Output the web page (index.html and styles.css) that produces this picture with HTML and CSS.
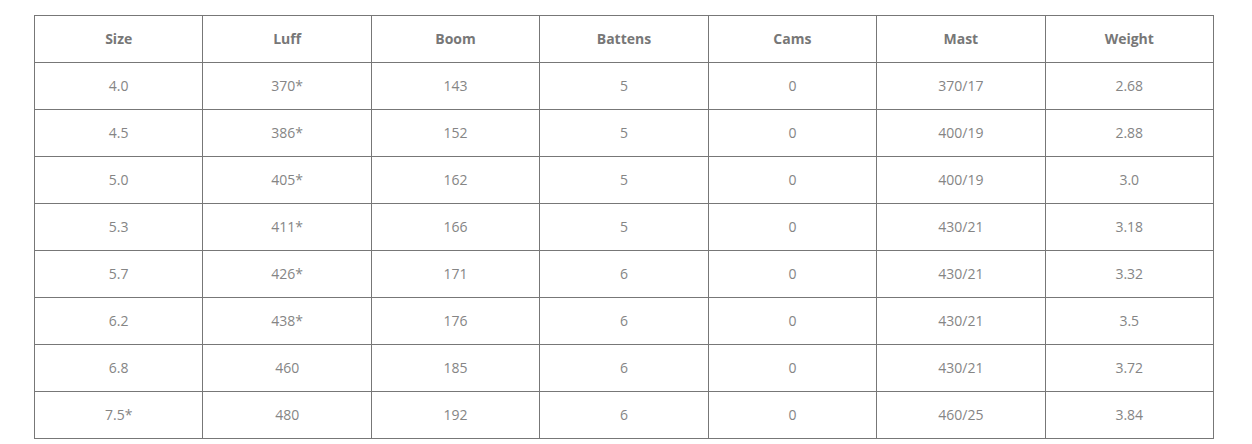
FILE: index.html
```html
<!DOCTYPE html>
<html>
<head>
<meta charset="utf-8">
<link rel="stylesheet" href="styles.css">
</head>
<body>
<div class="wrap">
<table class="specs">
<thead>
<tr><th>Size</th><th>Luff</th><th>Boom</th><th>Battens</th><th>Cams</th><th>Mast</th><th>Weight</th></tr>
</thead>
<tbody>
<tr><td>4.0</td><td>370*</td><td>143</td><td>5</td><td>0</td><td>370/17</td><td>2.68</td></tr>
<tr><td>4.5</td><td>386*</td><td>152</td><td>5</td><td>0</td><td>400/19</td><td>2.88</td></tr>
<tr><td>5.0</td><td>405*</td><td>162</td><td>5</td><td>0</td><td>400/19</td><td>3.0</td></tr>
<tr><td>5.3</td><td>411*</td><td>166</td><td>5</td><td>0</td><td>430/21</td><td>3.18</td></tr>
<tr><td>5.7</td><td>426*</td><td>171</td><td>6</td><td>0</td><td>430/21</td><td>3.32</td></tr>
<tr><td>6.2</td><td>438*</td><td>176</td><td>6</td><td>0</td><td>430/21</td><td>3.5</td></tr>
<tr><td>6.8</td><td>460</td><td>185</td><td>6</td><td>0</td><td>430/21</td><td>3.72</td></tr>
<tr><td>7.5*</td><td>480</td><td>192</td><td>6</td><td>0</td><td>460/25</td><td>3.84</td></tr>
</tbody>
</table>
</div>
</body>
</html>
```
FILE: styles.css
```css
html, body {
  margin: 0;
  padding: 0;
  background: #fff;
}
.wrap {
  padding: 15px 0 0 34px;
}
.specs {
  width: 1180px;
  table-layout: fixed;
  border-collapse: collapse;
  font-family: "Open Sans", sans-serif;
  font-size: 14px;
  color: #777;
}
.specs th,
.specs td {
  border: 1px solid #777;
  height: 47px;
  padding: 0 8px;
  box-sizing: border-box;
  text-align: center;
  vertical-align: middle;
  line-height: 20px;
}
.specs th {
  font-weight: 700;
  color: #777;
}
.specs td {
  font-weight: 400;
  color: #858585;
}
```
